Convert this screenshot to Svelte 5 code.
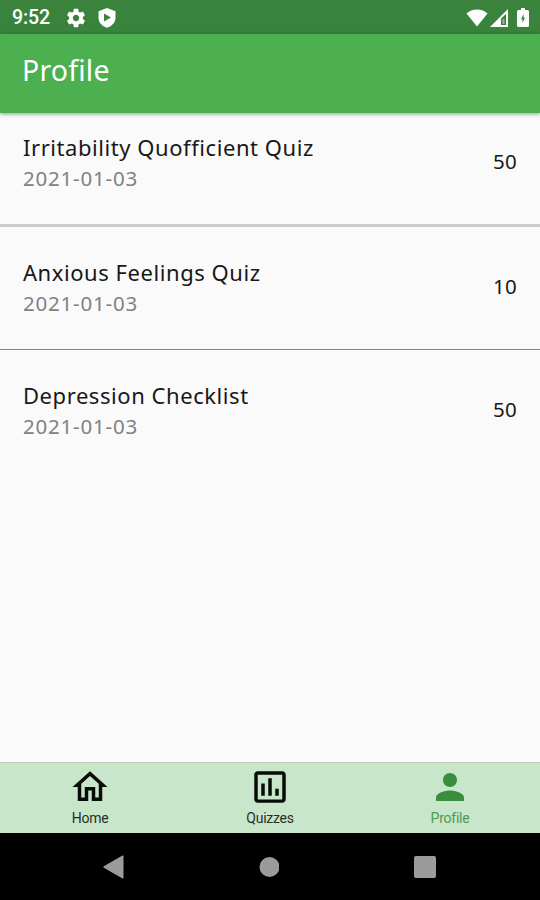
<script>
  let active = $state('profile');

  const results = [
    { title: 'Irritability Quofficient Quiz', date: '2021-01-03', score: 50, id: 'irritability' },
    { title: 'Anxious Feelings Quiz', date: '2021-01-03', score: 10, id: 'anxious' },
    { title: 'Depression Checklist', date: '2021-01-03', score: 50, id: 'depression' },
  ];

  const tabs = [
    { id: 'home', label: 'Home', path: 'M12 5.69l5 4.5V18h-2v-6H9v6H7v-7.81l5-4.5M12 3L2 12h3v8h6v-6h2v6h6v-8h3L12 3z' },
    { id: 'quizzes', label: 'Quizzes', path: 'M9 17H7v-7h2v7zm4 0h-2V7h2v10zm4 0h-2v-4h2v4zm2 2.1H5V5h14v14.1zm0-16.1H5c-1.1 0-2 .9-2 2v14c0 1.1.9 2 2 2h14c1.1 0 2-.9 2-2V5c0-1.1-.9-2-2-2z' },
    { id: 'profile', label: 'Profile', path: 'M12 12c2.21 0 4-1.79 4-4s-1.79-4-4-4-4 1.79-4 4 1.79 4 4 4zm0 2c-2.67 0-8 1.34-8 4v2h16v-2c0-2.66-5.33-4-8-4z' },
  ];
</script>

<div class="screen">
  <div class="status-bar">
    <span class="time">9:52</span>
    <svg class="gear" viewBox="0 0 24 24" width="22" height="22">
      <path fill="currentColor" d="M19.43 12.98c.04-.32.07-.64.07-.98s-.03-.66-.07-.98l2.11-1.65c.19-.15.24-.42.12-.64l-2-3.46c-.12-.22-.39-.3-.61-.22l-2.49 1c-.52-.4-1.08-.73-1.69-.98l-.38-2.65C14.46 2.18 14.25 2 14 2h-4c-.25 0-.46.18-.49.42l-.38 2.65c-.61.25-1.17.59-1.69.98l-2.49-1c-.23-.09-.49 0-.61.22l-2 3.46c-.13.22-.07.49.12.64l2.11 1.65c-.04.32-.07.65-.07.98s.03.66.07.98l-2.11 1.65c-.19.15-.24.42-.12.64l2 3.46c.12.22.39.3.61.22l2.49-1c.52.4 1.08.73 1.69.98l.38 2.65c.03.24.24.42.49.42h4c.25 0 .46-.18.49-.42l.38-2.65c.61-.25 1.17-.59 1.69-.98l2.49 1c.23.09.49 0 .61-.22l2-3.46c.12-.22.07-.49-.12-.64l-2.11-1.65zM12 15.5c-1.93 0-3.5-1.57-3.5-3.5s1.57-3.5 3.5-3.5 3.5 1.57 3.5 3.5-1.57 3.5-3.5 3.5z" />
    </svg>
    <svg class="shield" viewBox="0 0 18 20" width="18" height="20">
      <path fill="currentColor" fill-rule="evenodd" d="M9 0l8.5 3.3v6.2c0 4.8-3.2 8.6-8.5 10.3C3.7 18.1.5 14.3.5 9.5V3.3L9 0zM6 5.5v8l7-4-7-4z" />
    </svg>
    <div class="signals">
      <svg viewBox="0 0 22 18" width="22" height="18">
        <path fill="currentColor" d="M.5 4.500C6-.8 16-.8 21.500 4.500L11 17.500z" />
      </svg>
      <svg class="cell" viewBox="0 0 18 18" width="18" height="18">
        <path fill="currentColor" fill-rule="evenodd" d="M0 18L18 0v18zM11 9.600v6.400h5V5z" />
        <path fill="currentColor" d="M12.500 10h2v5h-2z" opacity=".45" />
      </svg>
      <svg class="battery" viewBox="0 0 12 19" width="12" height="19">
        <path fill="currentColor" fill-rule="evenodd" d="M4 0h4v2h2.500q1.500 0 1.500 1.500v14q0 1.500-1.500 1.500h-9Q0 19 0 17.500v-14Q0 2 1.500 2H4zM6.600 6L4 11.200h1.500V15L8 9.700H6.600z" />
      </svg>
    </div>
  </div>

  <header class="app-bar">
    <h1>Profile</h1>
  </header>

  <main class="results">
    {#each results as result}
      <div class="result {result.id}">
        <div class="info">
          <span class="title">{result.title}</span>
          <span class="date">{result.date}</span>
        </div>
        <span class="score">{result.score}</span>
      </div>
    {/each}
  </main>

  <nav class="tabs">
    {#each tabs as tab}
      <button class="tab" class:active={active === tab.id} onclick={() => (active = tab.id)}>
        <svg viewBox="0 0 24 24" width="42" height="42" fill="currentColor">
          <path d={tab.path} />
        </svg>
        <span class="label">{tab.label}</span>
      </button>
    {/each}
  </nav>

  <div class="system-nav">
    <svg viewBox="0 0 21 24" width="21" height="24"><path fill="#9b9b9b" d="M.8 11.200L19.500.5q1-.4 1 .7v21.600q0 1.100-1 .7L.8 12.800q-1-.8 0-1.600z" /></svg>
    <svg viewBox="0 0 20 20" width="20" height="20"><circle cx="10" cy="10" r="10" fill="#9b9b9b" /></svg>
    <svg viewBox="0 0 22 22" width="22" height="22"><rect width="22" height="22" rx="2" fill="#9b9b9b" /></svg>
  </div>
</div>

<style>
  :global(body) {
    margin: 0;
  }

  .screen {
    display: flex;
    flex-direction: column;
    width: 540px;
    height: 900px;
    overflow: hidden;
    background: #fafafa;
    font-family: 'Noto Sans', sans-serif;
  }

  .status-bar {
    display: flex;
    align-items: center;
    box-sizing: border-box;
    height: 34px;
    flex-shrink: 0;
    padding: 1px 11px 0 12px;
    background: #3a833d;
    color: #fff;
  }

  .time {
    width: 53px;
    font: 500 19.5px/24px Roboto, sans-serif;
    letter-spacing: -0.1px;
  }

  .shield {
    margin-left: 11px;
  }

  .signals {
    display: flex;
    align-items: center;
    margin-left: auto;
  }

  .cell {
    margin-left: 2px;
  }

  .battery {
    margin-left: 9px;
  }

  .app-bar {
    display: flex;
    align-items: center;
    box-sizing: border-box;
    height: 79px;
    flex-shrink: 0;
    padding: 0 24px 8px 22px;
    background: #4caf50;
    box-shadow: 0 1px 4px rgba(0, 0, 0, 0.4);
    color: #fff;
    z-index: 1;
  }

  h1 {
    margin: 0;
    font-size: 28.5px;
    font-weight: 400;
    line-height: 38px;
    letter-spacing: 0.2px;
  }

  .results {
    flex: 1;
  }

  .result {
    display: flex;
    align-items: center;
    justify-content: space-between;
    box-sizing: border-box;
    height: 124px;
    padding: 0 23px 0 23px;
    color: #181818;
  }

  .irritability {
    height: 114px;
    padding-bottom: 12px;
    border-bottom: 3px solid #cbcbcb;
  }

  .anxious {
    height: 123px;
    padding-bottom: 2px;
    border-bottom: 1px solid #858585;
  }

  .depression {
    padding-bottom: 3px;
  }

  .info {
    display: flex;
    flex-direction: column;
  }

  .title {
    font-size: 22px;
    line-height: 31px;
    letter-spacing: 0.56px;
  }

  .date {
    color: #818181;
    font-size: 20.5px;
    line-height: 30px;
    letter-spacing: 0.8px;
  }

  .score {
    margin-bottom: 3px;
    font-size: 20.5px;
    line-height: 30px;
    letter-spacing: 0.3px;
  }

  .tabs {
    display: flex;
    box-sizing: border-box;
    height: 71px;
    flex-shrink: 0;
    border-top: 1px solid #bccfbd;
    background: #c8e6c9;
  }

  .tab {
    display: flex;
    flex: 1;
    flex-direction: column;
    align-items: center;
    padding: 3px 0 0;
    border: none;
    background: transparent;
    color: #080c08;
    cursor: pointer;
  }

  .tab.active {
    color: #388e3c;
  }

  .label {
    margin-top: 2px;
    font: 14px/16px Roboto, sans-serif;
    letter-spacing: -0.25px;
    opacity: 0.85;
  }

  .system-nav {
    display: flex;
    align-items: center;
    justify-content: space-between;
    box-sizing: border-box;
    height: 67px;
    flex-shrink: 0;
    padding: 0 104px 0 103px;
    background: #000;
  }

  .system-nav circle {
    transform: translateX(0.5px);
  }
</style>
